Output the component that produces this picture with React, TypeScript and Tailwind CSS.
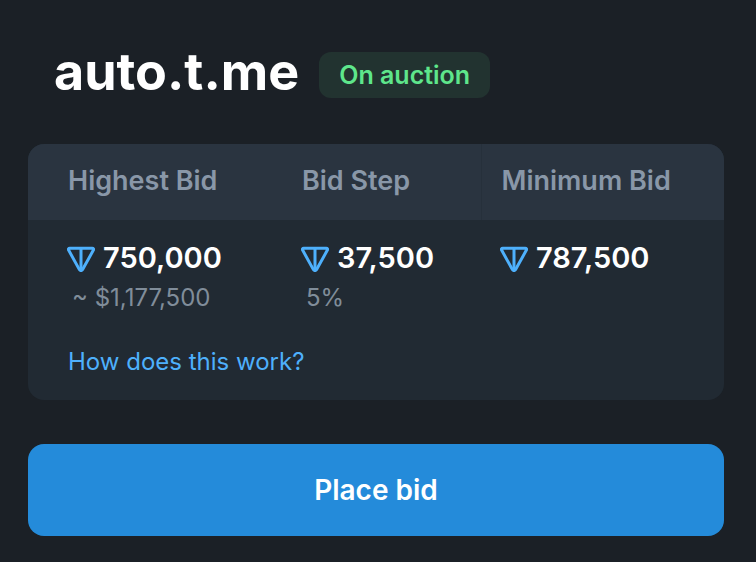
const columns = [
  { title: "Highest Bid", amount: "750,000", note: "~ $1,177,500" },
  { title: "Bid Step", amount: "37,500", note: "5%" },
  { title: "Minimum Bid", amount: "787,500", note: "" },
]

function TonIcon() {
  return (
    <svg viewBox="0 0 28 28" className="size-7 shrink-0 text-[#4eb0fc]" fill="none" stroke="currentColor" strokeWidth="3" strokeLinejoin="round" aria-hidden="true">
      <path d="M2.8 4.2h22.4c1.2 0 1.7 1 1.2 1.9L15.6 25.6c-.7 1.3-2.5 1.3-3.2 0L1.6 6.1c-.5-.9 0-1.9 1.2-1.9Z" />
      <path d="M14 4.2V26" />
    </svg>
  )
}

export default function App() {
  return (
    <main className="min-h-screen bg-[#1b2026] px-7 pr-8 pt-11 pb-6 font-['Inter',sans-serif]">
      <header className="flex items-end gap-5 pl-[26px]">
        <h1 className="pb-1 text-[52px] leading-[56px] font-bold text-white">auto.t.me</h1>
        <span className="mb-1.5 rounded-xl bg-[#223330] px-5 text-[25px] leading-[46px] font-semibold text-[#5ee68b]">
          On auction
        </span>
      </header>

      <section className="mt-10 overflow-hidden rounded-2xl bg-[#212a33]">
        <table className="w-full table-fixed text-left">
          <colgroup>
            <col className="w-[254px]" />
            <col className="w-[199px]" />
            <col />
          </colgroup>
          <thead className="bg-[#2a3440]">
            <tr>
              {columns.map((column) => (
                <th key={column.title} scope="col" className="h-[76px] pb-0.5 pl-5 text-[27px] leading-8 font-semibold whitespace-nowrap text-[#8997a8] first:pl-10 last:border-l last:border-[#26303b]">
                  {column.title}
                </th>
              ))}
            </tr>
          </thead>
          <tbody>
            <tr className="align-top">
              {columns.map((column) => (
                <td key={column.title} className="pt-5 pl-5 first:pl-10">
                  <div className="-ml-px flex items-center gap-2 text-[29px] leading-9 font-semibold text-white">
                    <TonIcon />
                    {column.amount}
                  </div>
                  {column.note && <div className="pt-0.5 pl-1 text-[24px] leading-10 text-[#808d9a]">{column.note}</div>}
                </td>
              ))}
            </tr>
          </tbody>
        </table>
        <div className="px-10 pt-6 pb-[18px]">
          <a href="#how" className="text-[24px] leading-10 text-[#4eb0fc]">
            How does this work?
          </a>
        </div>
      </section>

      <button type="button" className="mt-11 h-[92px] w-full rounded-2xl bg-[#248bda] text-[28px] font-semibold text-white">
        Place bid
      </button>
    </main>
  )
}
